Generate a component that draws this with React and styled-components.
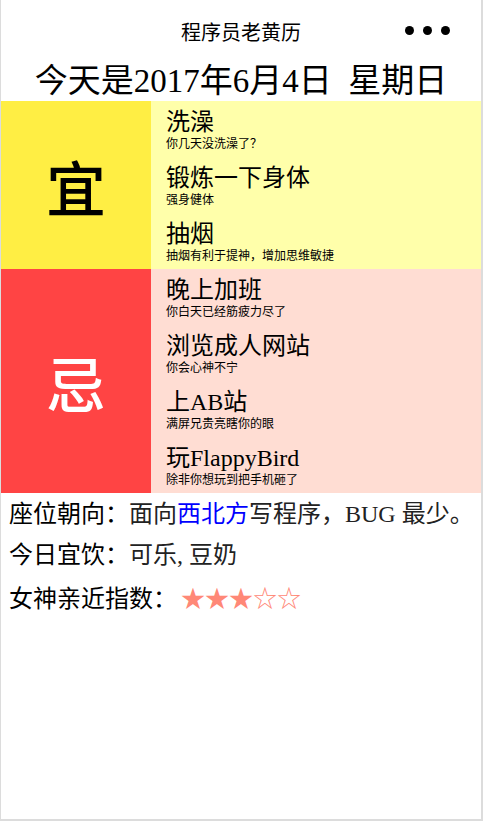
import React from 'react';
import styled, { createGlobalStyle } from 'styled-components';

const GlobalStyle = createGlobalStyle`
  html, body {
    margin: 0;
    padding: 0;
    background: #fff;
  }
  body {
    font-family: "Liberation Serif", "Noto Sans CJK SC", serif;
    color: #000;
  }
`;

const Page = styled.div`
  box-sizing: border-box;
  width: 483px;
  height: 821px;
  border-left: 1px solid #dcdcdc;
  border-right: 2px solid #dcdcdc;
  border-bottom: 2px solid #dcdcdc;
  background: #fff;
  overflow: hidden;
`;

const TopBar = styled.header`
  display: grid;
  grid-template-columns: 1fr auto 1fr;
  align-items: center;
  height: 64px;
`;

const AppName = styled.div`
  grid-column: 2;
  font-family: "Noto Sans CJK SC", sans-serif;
  font-size: 20px;
  line-height: 1;
`;

const More = styled.div`
  grid-column: 3;
  justify-self: end;
  display: flex;
  gap: 9px;
  padding-right: 31px;
  margin-top: -3px;
`;

const Dot = styled.span`
  width: 9px;
  height: 9px;
  border-radius: 50%;
  background: #000;
`;

const DateLine = styled.h1`
  margin: 0;
  height: 37px;
  font-size: 33px;
  font-weight: normal;
  line-height: 35px;
  text-align: center;
  white-space: pre;
`;

const Section = styled.section`
  display: flex;
  background: ${p => p.$bad ? '#ffddd3' : '#ffffaa'};
`;

const Badge = styled.div`
  flex: 0 0 150px;
  display: flex;
  align-items: center;
  justify-content: center;
  background: ${p => p.$bad ? '#ff4444' : '#ffee44'};
  color: ${p => p.$bad ? '#fff' : '#000'};
  font-size: 60px;
  font-weight: 500;
`;

const List = styled.ul`
  list-style: none;
  margin: 0;
  padding: 0 0 0 15px;
  flex: 1;
`;

const Item = styled.li`
  box-sizing: border-box;
  height: 56px;
  padding-top: 8px;
`;

const ItemName = styled.div`
  font-size: 24px;
  line-height: 26px;
`;

const ItemDesc = styled.div`
  font-family: "Noto Sans CJK SC", sans-serif;
  font-size: 12px;
  line-height: 16px;
`;

const Info = styled.ul`
  list-style: none;
  margin: 0;
  padding: 1px 8px 0;
`;

const InfoRow = styled.li`
  font-size: 24px;
  line-height: 41px;
  white-space: nowrap;
`;

const Label = styled.span`
  color: #000;
`;

const Value = styled.span`
  color: #222;
`;

const Highlight = styled.span`
  color: #0000ff;
`;

const Stars = styled.span`
  color: #ff8877;
  margin-left: 4px;
  font-family: "Noto Sans CJK SC", sans-serif;
`;

const good = [
  { name: '洗澡', desc: '你几天没洗澡了？' },
  { name: '锻炼一下身体', desc: '强身健体' },
  { name: '抽烟', desc: '抽烟有利于提神，增加思维敏捷' },
];

const bad = [
  { name: '晚上加班', desc: '你白天已经筋疲力尽了' },
  { name: '浏览成人网站', desc: '你会心神不宁' },
  { name: '上AB站', desc: '满屏兄贵亮瞎你的眼' },
  { name: '玩FlappyBird', desc: '除非你想玩到把手机砸了' },
];

const Block = ({ label, items, bad: isBad }) => (
  <Section $bad={isBad}>
    <Badge $bad={isBad}>{label}</Badge>
    <List>
      {items.map(it => (
        <Item key={it.name}>
          <ItemName>{it.name}</ItemName>
          <ItemDesc>{it.desc}</ItemDesc>
        </Item>
      ))}
    </List>
  </Section>
);

export default function App() {
  return (
    <Page>
      <GlobalStyle />
      <TopBar>
        <AppName>程序员老黄历</AppName>
        <More>
          <Dot />
          <Dot />
          <Dot />
        </More>
      </TopBar>
      <DateLine>今天是2017年6月4日  星期日</DateLine>
      <Block label="宜" items={good} />
      <Block label="忌" items={bad} bad />
      <Info>
        <InfoRow>
          <Label>座位朝向：</Label>
          <Value>面向<Highlight>西北方</Highlight>写程序，BUG 最少。</Value>
        </InfoRow>
        <InfoRow>
          <Label>今日宜饮：</Label>
          <Value>可乐, 豆奶</Value>
        </InfoRow>
        <InfoRow>
          <Label>女神亲近指数：</Label>
          <Stars>★★★☆☆</Stars>
        </InfoRow>
      </Info>
    </Page>
  );
}
